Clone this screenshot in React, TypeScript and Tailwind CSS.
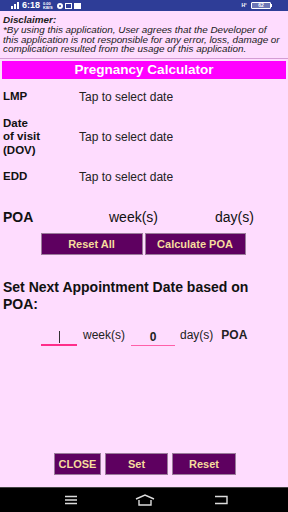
import React from 'react';

const font = { fontFamily: '"Liberation Sans", Arial, sans-serif' };

const App: React.FC = () => {
  const rows = [
    { label: 'LMP', h: 'h-[20px]' },
    { label: 'Date\nof visit\n(DOV)', h: 'h-[42px]' },
    { label: 'EDD', h: 'h-[20px]' }
  ];

  return (
    <div className="w-[288px] h-[512px] bg-[#fedcfe] flex flex-col overflow-hidden" style={font}>
      {/* status bar */}
      <div className="h-[11px] bg-[#2e3d97] flex items-center px-[11px] text-white shrink-0">
        <div className="flex items-end gap-[1px] mr-[3px]">
          <span className="w-[2px] h-[3px] bg-white" />
          <span className="w-[2px] h-[5px] bg-white" />
          <span className="w-[2px] h-[7px] bg-white" />
        </div>
        <span className="text-[9px] font-bold leading-none">6:18</span>
        <span className="text-[4px] leading-[4px] ml-[3px] font-bold">0.00<br />KB/S</span>
        <span className="ml-[4px] w-[6px] h-[6px] rounded-full border-[2px] border-white" />
        <span className="ml-[2px] w-[7px] h-[6px] border border-white" />
        <span className="ml-[2px] w-[7px] h-[6px] bg-white" />
        <span className="ml-auto text-[5px] font-bold mr-[4px]">H⁺</span>
        <span className="w-[20px] h-[7px] border border-white rounded-[1px] text-[5px] leading-[5px] text-center bg-white/30 font-bold">62</span>
        <span className="w-[1px] h-[3px] bg-white mr-[5px]" />
      </div>

      {/* disclaimer */}
      <div className="px-[3px] pt-[4px] pb-[4px] text-[9.9px] leading-[9.8px] italic text-[#222] border-b border-[#d49cd4] whitespace-nowrap">
        <p className="font-bold">Disclaimer:</p>
        <p>
          *By using this application, User agrees that the Developer of<br />
          this application is not responsible for any error, loss, damage or<br />
          complication resulted from the usage of this application.
        </p>
      </div>

      <div className="mx-[2px] mt-[2px] h-[18px] bg-[#ff00ff] flex items-center justify-center text-white font-bold text-[13.5px]">
        Pregnancy Calculator
      </div>

      <div className="mt-[8px] flex flex-col gap-[9px]">
        {rows.map((r) => (
          <div key={r.label} className={`flex items-center ${r.h}`}>
            <div className="w-[79px] pl-[3px] font-bold text-[11.5px] leading-[13.5px] text-[#111] whitespace-pre-line">{r.label}</div>
            <div className="text-[12px] text-[#222]">Tap to select date</div>
          </div>
        ))}
      </div>

      <div className="mt-[20px] flex items-center text-[14px] text-[#111] h-[20px]">
        <span className="w-[109px] pl-[3px] font-bold">POA</span>
        <span className="w-[106px]">week(s)</span>
        <span>day(s)</span>
      </div>

      <div className="mt-[6px] flex justify-center gap-[2px] pr-[2px]">
        <button className="w-[102px] h-[22px] bg-[#5e0060] border border-[#9a7c9a] text-[#f6dc9e] font-bold text-[11px]">Reset All</button>
        <button className="w-[101px] h-[22px] bg-[#5e0060] border border-[#9a7c9a] text-[#f6dc9e] font-bold text-[11px]">Calculate POA</button>
      </div>

      <div className="mt-[24px] px-[3px] font-bold text-[14px] leading-[17px] text-[#111]">
        Set Next Appointment Date based on POA:
      </div>

      <div className="mt-[13px] flex items-end pl-[41px] text-[12px] text-[#222]">
        <div className="w-[36px] h-[17px] border-b-2 border-[#ff2d8a] flex justify-center items-center">
          <span className="w-[1px] h-[12px] bg-[#333]" />
        </div>
        <span className="ml-[6px] mb-[2px]">week(s)</span>
        <div className="ml-[6px] w-[44px] h-[17px] border-b-[1.5px] border-[#ff5fa8] flex justify-center items-center font-bold">0</div>
        <span className="ml-[5px] mb-[2px]">day(s)</span>
        <span className="ml-[8px] mb-[2px] font-bold">POA</span>
      </div>

      <div className="mt-auto mb-[12px] flex justify-center gap-[4px] pl-[2px]">
        <button className="w-[47px] h-[22px] bg-[#5e0060] border border-[#9a7c9a] text-[#f6dc9e] font-bold text-[11px]">CLOSE</button>
        <button className="w-[63px] h-[22px] bg-[#5e0060] border border-[#9a7c9a] text-[#f6dc9e] font-bold text-[11px]">Set</button>
        <button className="w-[64px] h-[22px] bg-[#5e0060] border border-[#9a7c9a] text-[#f6dc9e] font-bold text-[11px]">Reset</button>
      </div>

      {/* nav bar */}
      <div className="h-[25px] bg-black border-t border-[#444] flex items-center justify-around px-[38px] shrink-0">
        <svg width="14" height="10" viewBox="0 0 14 10" className="ml-[4px]">
          <path d="M1 1.5h12M1 5h12M1 8.5h12" stroke="#ddd" strokeWidth="1.5" />
        </svg>
        <svg width="20" height="12" viewBox="0 0 20 12" className="ml-[12px]">
          <path d="M1 5L10 1l9 4M4 6v5h12V6" stroke="#ddd" strokeWidth="1.4" fill="none" />
        </svg>
        <svg width="14" height="10" viewBox="0 0 14 10" className="ml-[14px]">
          <path d="M1 1.5h12v7H1" stroke="#ddd" strokeWidth="1.4" fill="none" />
        </svg>
      </div>
    </div>
  );
};

export default App;
